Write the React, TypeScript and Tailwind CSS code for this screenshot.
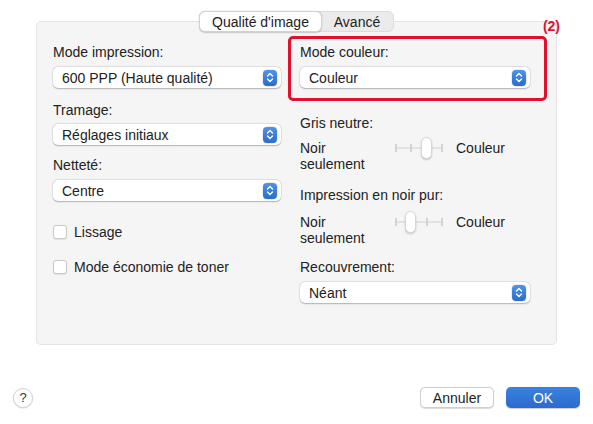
import React from 'react';

const Stepper: React.FC = () => (
  <div className="w-[14px] h-[16px] rounded-[4px] bg-gradient-to-b from-[#4f93ea] to-[#2a6ccd] flex items-center justify-center shadow-[0_0_0_0.5px_rgba(0,0,0,0.15)]">
    <svg width="8" height="11" viewBox="0 0 8 11" fill="none">
      <path d="M1.5 4L4 1.5L6.5 4" stroke="white" strokeWidth="1.4" strokeLinecap="round" strokeLinejoin="round" />
      <path d="M1.5 7L4 9.5L6.5 7" stroke="white" strokeWidth="1.4" strokeLinecap="round" strokeLinejoin="round" />
    </svg>
  </div>
);

const Select: React.FC<{ value: string; className?: string }> = ({ value, className = '' }) => (
  <div className={`h-[21px] bg-white rounded-[5px] shadow-[0_0.5px_1.5px_rgba(0,0,0,0.25),0_0_0_0.5px_rgba(0,0,0,0.08)] flex items-center justify-between pl-[9px] pr-[4px] ${className}`}>
    <span>{value}</span>
    <Stepper />
  </div>
);

const Checkbox: React.FC<{ label: string; className?: string }> = ({ label, className = '' }) => (
  <div className={`flex items-center h-[16px] ${className}`}>
    <div className="w-[14px] h-[14px] bg-white rounded-[3px] border border-[#c9c9c9] shadow-[0_0.5px_1px_rgba(0,0,0,0.08)]" />
    <span className="ml-[7px]">{label}</span>
  </div>
);

const Slider: React.FC<{ pos: number }> = ({ pos }) => {
  const ticks = [0, 15, 31, 46];
  return (
    <div className="relative w-[47px] h-[22px]">
      <div className="absolute left-0 right-0 top-[10px] h-[2px] bg-[#e2e2e2] rounded-full" />
      {ticks.map((t) => (
        <div key={t} className="absolute top-[7px] w-[1.5px] h-[8px] bg-[#d3d3d3]" style={{ left: t }} />
      ))}
      <div
        className="absolute top-0 w-[11px] h-[22px] bg-white rounded-full border border-[#d6d6d6] shadow-[0_1px_2px_rgba(0,0,0,0.2)]"
        style={{ left: ticks[pos] - 5 }}
      />
    </div>
  );
};

const SliderRow: React.FC<{ pos: number; className?: string }> = ({ pos, className = '' }) => (
  <div className={`flex items-start ${className}`}>
    <div className="w-[95px] leading-[16px]">
      Noir
      <br />
      seulement
    </div>
    <div className="-mt-[3px]">
      <Slider pos={pos} />
    </div>
    <div className="ml-[14px] leading-[16px]">Couleur</div>
  </div>
);

export default function App() {
  return (
    <div className="w-[593px] h-[424px] bg-white font-['Liberation_Sans',Arial,sans-serif] text-[14px] leading-[16px] text-[#222]">
      <div className="ml-[36px] w-[521px] pt-[11px] relative">
        <div className="relative z-10 flex justify-center">
          <div className="flex h-[21px] w-[195px] rounded-[6px] bg-[#ebebeb] border border-[#dcdcdc]">
            <div className="w-[123px] -m-px h-[21px] flex items-center justify-center bg-white rounded-[6px] border border-[#d2d2d2] shadow-[0_0.5px_1.5px_rgba(0,0,0,0.2)]">
              Qualité d'image
            </div>
            <div className="flex-1 flex items-center justify-center">Avancé</div>
          </div>
        </div>
        <div className="absolute right-[-3px] top-[18px] text-[14px] font-bold text-[#e0102e]">(2)</div>
        <div className="-mt-[11px] h-[324px] rounded-[5px] border border-[#e4e4e4] bg-[#f5f5f5] flex">
          <div className="w-[228px] ml-[16px] pt-[22px] flex flex-col">
            <div>Mode impression:</div>
            <Select value="600 PPP (Haute qualité)" className="mt-[7px]" />
            <div className="mt-[14px]">Tramage:</div>
            <Select value="Réglages initiaux" className="mt-[6px]" />
            <div className="mt-[12px]">Netteté:</div>
            <Select value="Centre" className="mt-[7px]" />
            <Checkbox label="Lissage" className="mt-[23px]" />
            <Checkbox label="Mode économie de toner" className="mt-[19px]" />
          </div>
          <div className="ml-[7px] w-[259px] pt-[14px] flex flex-col">
            <div className="border-[3px] border-[#e0102e] rounded-[5px] pl-[9px] pr-[14px] pt-[5px] pb-[10px]">
              <div>Mode couleur:</div>
              <Select value="Couleur" className="mt-[7px]" />
            </div>
            <div className="pl-[12px] pr-[17px] flex flex-col">
              <div className="mt-[14px]">Gris neutre:</div>
              <SliderRow pos={2} className="mt-[9px]" />
              <div className="mt-[15px]">Impression en noir pur:</div>
              <SliderRow pos={1} className="mt-[11px]" />
              <div className="mt-[13px]">Recouvrement:</div>
              <Select value="Néant" className="mt-[7px]" />
            </div>
          </div>
        </div>
      </div>
      <div className="mt-[42px] px-[13px] flex items-center justify-between">
        <div className="w-[20px] h-[20px] rounded-full bg-white border border-[#d4d4d4] shadow-[0_0.5px_1px_rgba(0,0,0,0.15)] flex items-center justify-center text-[13px] text-[#333]">
          ?
        </div>
        <div className="flex gap-[12px]">
          <div className="w-[74px] h-[21px] rounded-[5px] bg-white border border-[#d0d0d0] shadow-[0_0.5px_1px_rgba(0,0,0,0.15)] flex items-center justify-center">
            Annuler
          </div>
          <div className="w-[74px] h-[21px] rounded-[5px] bg-gradient-to-b from-[#3c82e0] to-[#2a6bcc] text-white flex items-center justify-center shadow-[0_0.5px_1px_rgba(0,0,0,0.2)]">
            OK
          </div>
        </div>
      </div>
    </div>
  );
}
